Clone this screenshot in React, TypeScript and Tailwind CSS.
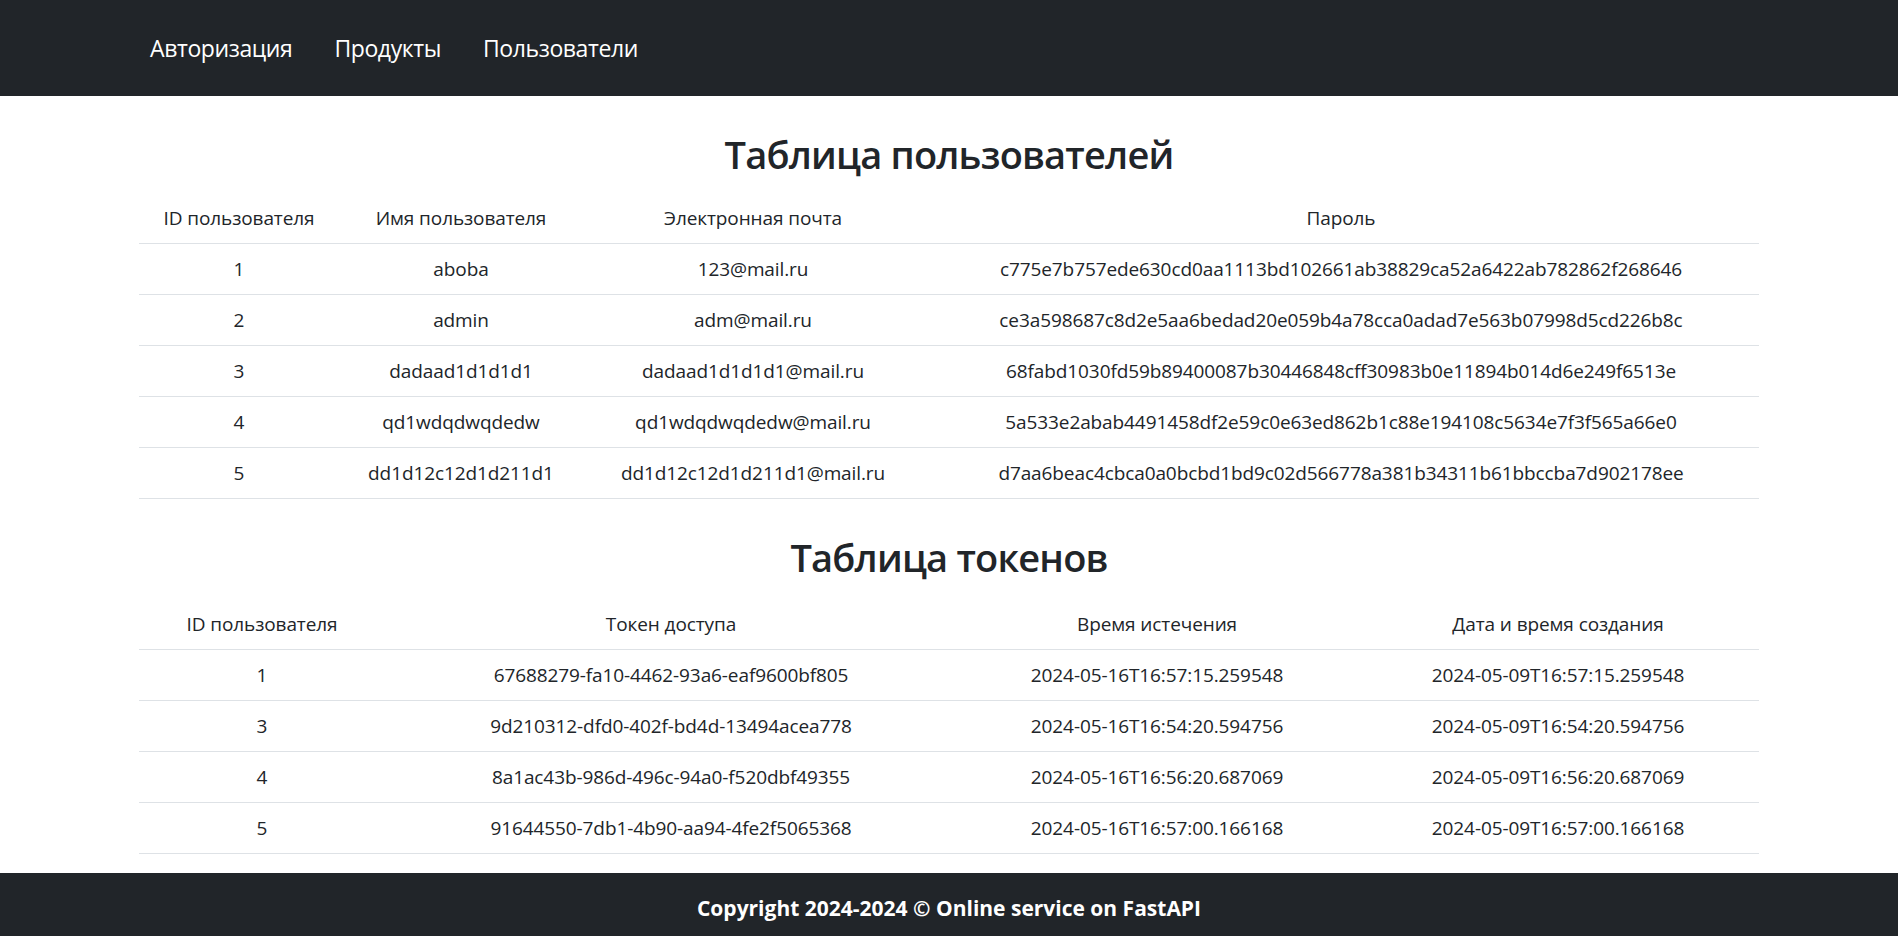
import React from "react";

const users = [
  ["1", "aboba", "123@mail.ru", "c775e7b757ede630cd0aa1113bd102661ab38829ca52a6422ab782862f268646"],
  ["2", "admin", "adm@mail.ru", "ce3a598687c8d2e5aa6bedad20e059b4a78cca0adad7e563b07998d5cd226b8c"],
  ["3", "dadaad1d1d1d1", "dadaad1d1d1d1@mail.ru", "68fabd1030fd59b89400087b30446848cff30983b0e11894b014d6e249f6513e"],
  ["4", "qd1wdqdwqdedw", "qd1wdqdwqdedw@mail.ru", "5a533e2abab4491458df2e59c0e63ed862b1c88e194108c5634e7f3f565a66e0"],
  ["5", "dd1d12c12d1d211d1", "dd1d12c12d1d211d1@mail.ru", "d7aa6beac4cbca0a0bcbd1bd9c02d566778a381b34311b61bbccba7d902178ee"],
];

const tokens = [
  ["1", "67688279-fa10-4462-93a6-eaf9600bf805", "2024-05-16T16:57:15.259548", "2024-05-09T16:57:15.259548"],
  ["3", "9d210312-dfd0-402f-bd4d-13494acea778", "2024-05-16T16:54:20.594756", "2024-05-09T16:54:20.594756"],
  ["4", "8a1ac43b-986d-496c-94a0-f520dbf49355", "2024-05-16T16:56:20.687069", "2024-05-09T16:56:20.687069"],
  ["5", "91644550-7db1-4b90-aa94-4fe2f5065368", "2024-05-16T16:57:00.166168", "2024-05-09T16:57:00.166168"],
];

function DataTable({
  headers,
  rows,
  widths,
  top,
}: {
  headers: string[];
  rows: string[][];
  widths: string[];
  top: string;
}) {
  return (
    <table className={`${top} w-full table-fixed border-collapse text-center text-[19px] leading-[30px] tracking-[-0.1px]`}>
      <colgroup>
        {widths.map((w, i) => (
          <col key={i} className={w} />
        ))}
      </colgroup>
      <thead>
        <tr className="border-b border-[#dee2e6]">
          {headers.map((h) => (
            <th key={h} className="px-[10px] py-[10px] font-normal">
              {h}
            </th>
          ))}
        </tr>
      </thead>
      <tbody>
        {rows.map((r, i) => (
          <tr key={i} className="border-b border-[#dee2e6]">
            {r.map((c, j) => (
              <td key={j} className="whitespace-nowrap px-[10px] py-[10px]">
                {c}
              </td>
            ))}
          </tr>
        ))}
      </tbody>
    </table>
  );
}

export default function App() {
  return (
    <div className="min-h-screen bg-white font-['Open_Sans','Noto_Sans',sans-serif] text-[#212529]">
      <nav className="h-[96px] bg-[#212529]">
        <div className="mx-auto flex h-full w-[1650px] items-center px-[15px]">
          <ul className="flex items-center gap-[42px] pl-[11px] text-[23px] leading-[36px] tracking-[-0.4px] text-white">
            <li>Авторизация</li>
            <li>Продукты</li>
            <li>Пользователи</li>
          </ul>
        </div>
      </nav>
      <main className="mx-auto w-[1650px] px-[15px]">
        <section className="pt-[34px]">
          <h2 className="text-center text-[38px] font-semibold leading-[48px] tracking-[-0.8px]">
            Таблица пользователей
          </h2>
          <DataTable
            top="mt-[15px]"
            headers={["ID пользователя", "Имя пользователя", "Электронная почта", "Пароль"]}
            rows={users}
            widths={["w-[200px]", "w-[244px]", "w-[340px]", "w-[836px]"]}
          />
        </section>
        <section className="pt-[34px]">
          <h2 className="text-center text-[38px] font-semibold leading-[48px] tracking-[-0.8px]">
            Таблица токенов
          </h2>
          <DataTable
            top="mt-[18px]"
            headers={["ID пользователя", "Токен доступа", "Время истечения", "Дата и время создания"]}
            rows={tokens}
            widths={["w-[246px]", "w-[572px]", "w-[400px]", "w-[402px]"]}
          />
        </section>
      </main>
      <footer className="relative mt-[19px] bg-[#212529] py-[20px] text-center text-[21px] font-bold leading-[30px] text-white">
        Copyright 2024-2024 © Online service on FastAPI
        <div className="absolute left-[452px] top-[64px] h-[3px] w-[61px] bg-[#5c5f63]" />
      </footer>
    </div>
  );
}
